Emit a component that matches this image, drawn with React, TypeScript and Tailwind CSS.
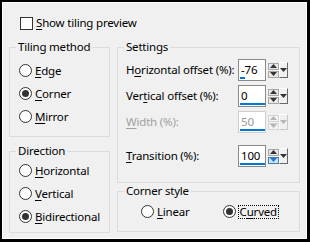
import type { ReactNode } from "react"

// underline the access-key letter
function Key({ text, at }: { text: string; at: number }) {
  return (
    <>
      {text.slice(0, at)}
      <span className="underline underline-offset-[2px]">{text[at]}</span>
      {text.slice(at + 1)}
    </>
  )
}

function Radio({ label, at, checked }: { label: string; at: number; checked?: boolean }) {
  return (
    <div className="flex h-[23px] items-center gap-[3px] whitespace-nowrap">
      <span className="flex h-[13px] w-[13px] items-center justify-center rounded-full border border-[#333] bg-white">
        {checked && <span className="h-[7px] w-[7px] rounded-full bg-[#333]" />}
      </span>
      <span>
        <Key text={label} at={at} />
      </span>
    </div>
  )
}

function Group({ title, className, children }: { title: string; className: string; children: ReactNode }) {
  return (
    <fieldset className={`border border-[#dcdcdc] ${className}`}>
      <legend className="ml-[6px] px-[2px] leading-[16px]">{title}</legend>
      {children}
    </fieldset>
  )
}

function Tri({ down, color = "#333" }: { down?: boolean; color?: string }) {
  return (
    <svg width="7" height="4" viewBox="0 0 7 4">
      <path d={down ? "M0 0h7L3.5 4z" : "M3.5 0L7 4H0z"} fill={color} />
    </svg>
  )
}

function Spin({
  value,
  bar,
  disabled,
  pressed,
}: {
  value: string
  bar: number
  disabled?: boolean
  pressed?: boolean
}) {
  const arrow = disabled ? "#b5b5b5" : "#333"
  return (
    <div className="flex items-center">
      <div
        className={`flex h-[22px] w-[28px] flex-col border bg-white ${
          disabled ? "border-[#cfcfcf] text-[#9a9a9a]" : "border-[#8a8a8a] text-black"
        }`}
      >
        <span className="pl-[2px] pt-[2px] leading-[15px]">{value}</span>
        <div className="mt-auto mb-[1px] ml-[1px] h-[3px] bg-[#0078d7]" style={{ width: bar }} />
      </div>
      <div className="ml-[2px] flex flex-col gap-[1px]">
        <div
          className={`flex h-[7px] w-[11px] items-center justify-center border ${
            disabled ? "border-[#d4d4d4] bg-[#f4f4f4]" : "border-[#a8a8a8] bg-[#e8e8e8]"
          }`}
        >
          <Tri color={arrow} />
        </div>
        <div
          className={`flex h-[7px] w-[11px] items-center justify-center border ${
            pressed
              ? "border-[#3c7fb1] bg-[#cce4f7]"
              : disabled
                ? "border-[#d4d4d4] bg-[#f4f4f4]"
                : "border-[#a8a8a8] bg-[#e8e8e8]"
          }`}
        >
          <Tri down color={pressed ? "#2a73c9" : arrow} />
        </div>
      </div>
      <div
        className={`flex h-[16px] w-[9px] items-center justify-center border border-t-white border-l-white bg-[#f0f0f0] ${
          disabled ? "border-r-[#c8c8c8] border-b-[#c8c8c8]" : "border-r-[#696969] border-b-[#696969]"
        }`}
      >
        <Tri down color={arrow} />
      </div>
    </div>
  )
}

function Row({ children, spin, className = "" }: { children: ReactNode; spin: ReactNode; className?: string }) {
  return (
    <div className={`flex h-[22px] items-center ${className}`}>
      <span className="flex-1 whitespace-nowrap">{children}</span>
      {spin}
    </div>
  )
}

export default function App() {
  return (
    <div className="h-[242px] w-[310px] border-t-2 border-l-2 border-r-[3px] border-b-[3px] border-black font-['Noto_Sans',sans-serif] text-[11.5px] tracking-[-0.2px] text-black">
      <div className="flex h-full flex-col border border-white bg-[#f0f0f0] px-[6px] pt-[12px]">
        <div className="ml-[11px] flex h-[16px] items-center gap-[3px]">
          <span className="h-[13px] w-[13px] border border-[#333] bg-white" />
          <span>
            <Key text="Show tiling preview" at={0} />
          </span>
        </div>

        <div className="mt-[8px] flex gap-[7px]">
          <div className="flex w-[101px] flex-col gap-[6px]">
            <Group title="Tiling method" className="h-[98px]">
              <div className="px-[9px] pt-[4px]">
                <Radio label="Edge" at={0} />
                <Radio label="Corner" at={0} checked />
                <Radio label="Mirror" at={0} />
              </div>
            </Group>
            <Group title="Direction" className="h-[90px]">
              <div className="px-[9px]">
                <Radio label="Horizontal" at={0} />
                <Radio label="Vertical" at={0} />
                <Radio label="Bidirectional" at={0} checked />
              </div>
            </Group>
          </div>

          <div className="flex w-[183px] flex-col">
            <Group title="Settings" className="h-[144px]">
              <div className="flex flex-col gap-[4px] pl-[8px] pr-[11px] pt-[4px]">
                <Row spin={<Spin value="-76" bar={5} />}>
                  <Key text="Horizontal offset (%):" at={1} />
                </Row>
                <Row spin={<Spin value="0" bar={25} />}>
                  <Key text="Vertical offset (%):" at={3} />
                </Row>
                <Row spin={<Spin value="50" bar={25} disabled />}>
                  <span className="text-[#a0a0a0]">
                    <Key text="Width (%):" at={0} />
                  </span>
                </Row>
                <Row className="mt-[8px]" spin={<Spin value="100" bar={25} pressed />}>
                  <Key text="Transition (%):" at={0} />
                </Row>
              </div>
            </Group>
            <Group title="Corner style" className="h-[49px]">
              <div className="flex items-center pl-[23px] pt-[1px]">
                <Radio label="Linear" at={0} />
                <div className="ml-[33px] flex h-[23px] items-center gap-[2px]">
                  <span className="flex h-[13px] w-[13px] items-center justify-center rounded-full border border-[#333] bg-white">
                    <span className="h-[7px] w-[7px] rounded-full bg-[#333]" />
                  </span>
                  <span className="border border-dotted border-black px-[1px] leading-[12px]">
                    <Key text="Curved" at={1} />
                  </span>
                </div>
              </div>
            </Group>
          </div>
        </div>
      </div>
    </div>
  )
}
